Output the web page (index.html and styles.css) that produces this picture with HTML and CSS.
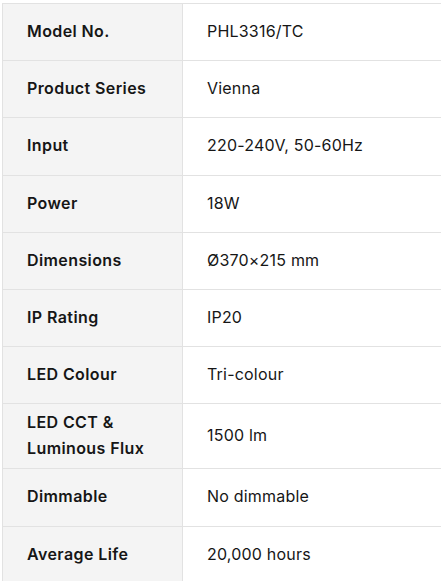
FILE: index.html
```html
<!DOCTYPE html>
<html lang="en">
<head>
<meta charset="utf-8">
<title>Specifications</title>
<link rel="stylesheet" href="styles.css">
</head>
<body>
<div class="wrap">
<table class="specs">
<tbody>
<tr><th>Model No.</th><td>PHL3316/TC</td></tr>
<tr><th>Product Series</th><td>Vienna</td></tr>
<tr><th>Input</th><td>220-240V, 50-60Hz</td></tr>
<tr><th>Power</th><td>18W</td></tr>
<tr><th>Dimensions</th><td>Ø370×215 mm</td></tr>
<tr><th>IP Rating</th><td>IP20</td></tr>
<tr><th>LED Colour</th><td>Tri-colour</td></tr>
<tr><th>LED CCT &amp;<br>Luminous Flux</th><td>1500 lm</td></tr>
<tr><th>Dimmable</th><td>No dimmable</td></tr>
<tr><th>Average Life</th><td>20,000 hours</td></tr>
</tbody>
</table>
</div>
</body>
</html>
```

FILE: styles.css
```css
html, body {
  margin: 0;
  padding: 0;
  background: #ffffff;
}
body {
  padding: 3px 0 0 2px;
  font-family: Inter, "Liberation Sans", sans-serif;
  font-size: 16px;
  color: #161616;
}
.wrap {
  overflow: hidden;
}
.specs {
  border-collapse: collapse;
  width: 470px;
  table-layout: fixed;
}
.specs th,
.specs td {
  border: 1px solid #e2e2e2;
  height: 44.2px;
  padding: 5px 24px 7px;
  line-height: 26px;
  text-align: left;
  vertical-align: middle;
}
.specs th {
  width: 131px;
  background: #f4f4f4;
  font-weight: 600;
  letter-spacing: 0.4px;
}
.specs td {
  font-weight: 400;
  letter-spacing: 0.2px;
}
```
